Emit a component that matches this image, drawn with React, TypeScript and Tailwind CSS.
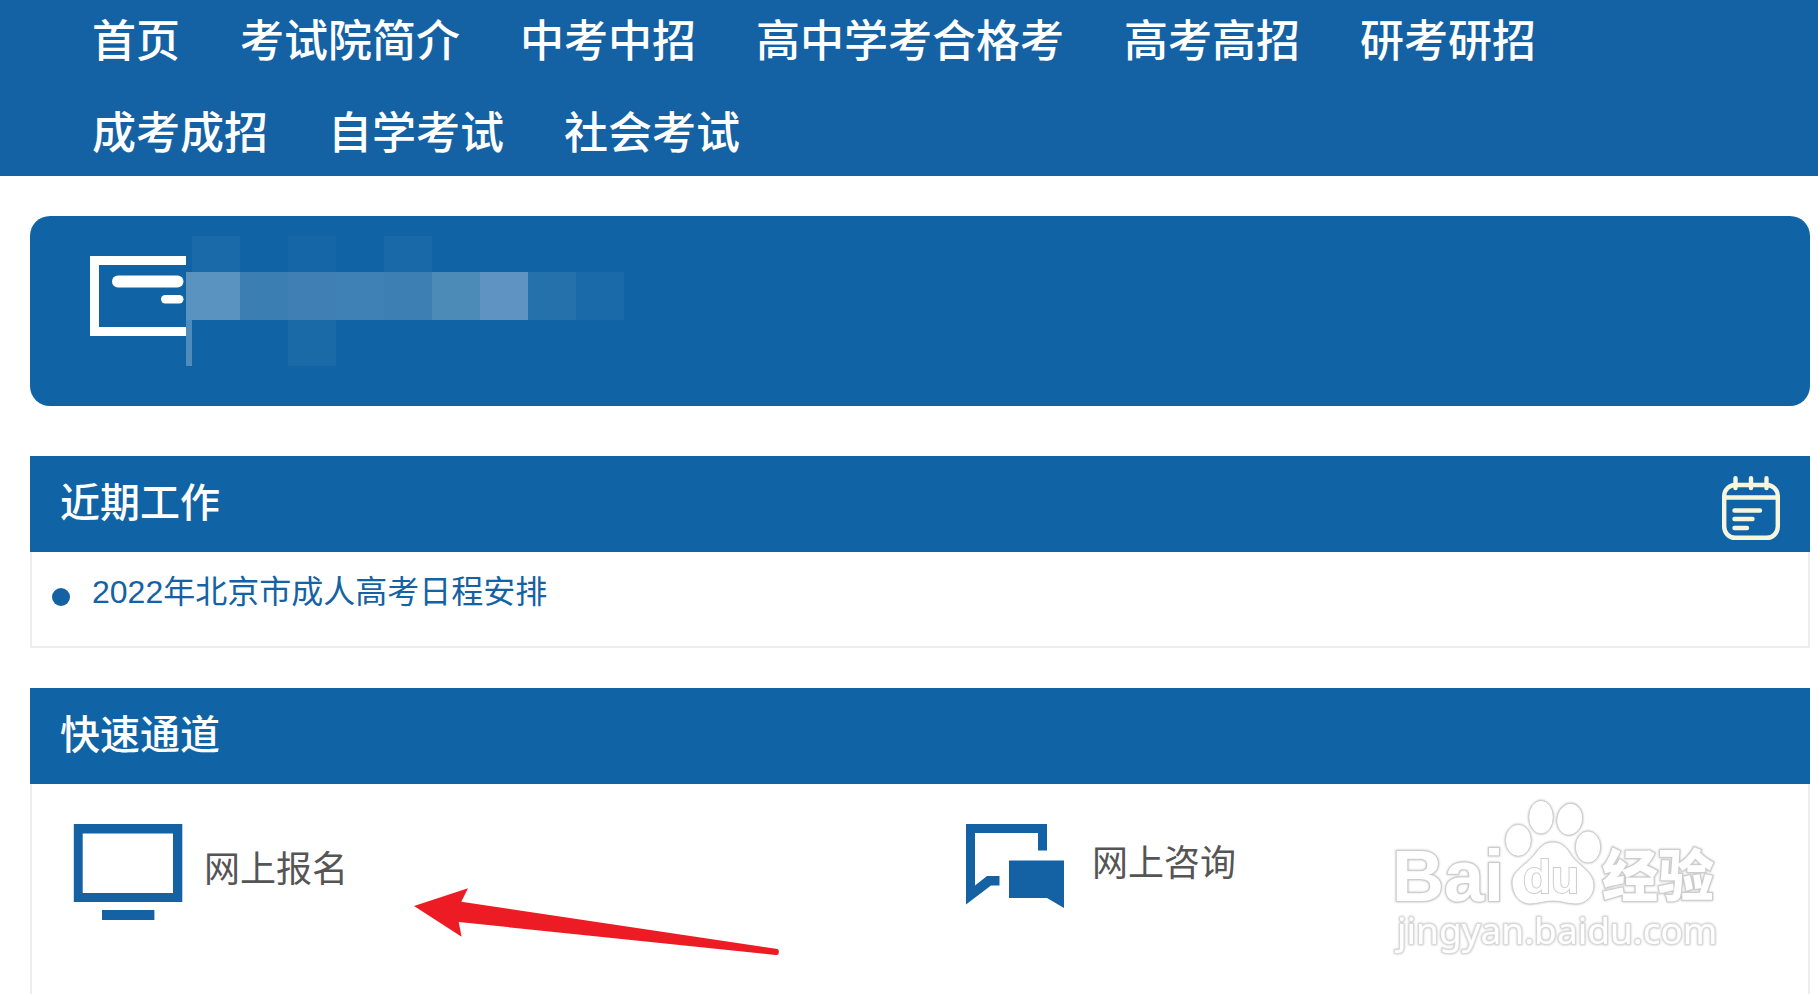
import type { ReactNode } from 'react';

const navItems = [
  '首页',
  '考试院简介',
  '中考中招',
  '高中学考合格考',
  '高考高招',
  '研考研招',
  '成考成招',
  '自学考试',
  '社会考试',
];

const news = ['2022年北京市成人高考日程安排'];

// masked name in the banner, row by row
const mosaic = [
  '', 'bg-[#1a69a8]', '', 'bg-[#1466a6]', '', 'bg-[#1969a8]', '', '', '', '',
  'bg-[#5a93bf]', 'bg-[#5a93bf]', 'bg-[#3a7eb2]', 'bg-[#3f7fb4]', 'bg-[#3f80b5]', 'bg-[#3d7eb3]', 'bg-[#4c8ab8]', 'bg-[#5f94c2]', 'bg-[#2571ac]', 'bg-[#1a69a8]',
  'bg-[#4f8cbb]', '', '', 'bg-[#1b6aa8]', '', '', '', '', '', '',
];

function CardIcon() {
  return (
    <svg className="mt-10 h-20 w-24 shrink-0" viewBox="0 0 96 80" fill="white" aria-hidden="true">
      <path d="M0 0H96V9H9V71H96V80H0Z" />
      <rect x="22" y="19.5" width="71.5" height="12" rx="6" />
      <rect x="71" y="39" width="22.5" height="8.5" rx="4.2" />
    </svg>
  );
}

function CalendarIcon() {
  return (
    <svg
      className="mt-5 h-16 w-[58px]"
      viewBox="0 0 58 64"
      fill="none"
      stroke="#f7f6dd"
      strokeWidth="4.4"
      strokeLinecap="round"
      aria-hidden="true"
    >
      <rect x="2.2" y="9" width="53.6" height="52.8" rx="11" />
      <path d="M3 21.5H55" />
      <path d="M13.5 2.2V12M29 2.2V12M44.5 2.2V12" />
      <path d="M12.5 34.5H38M12.5 43H30.5M12.5 52H25" />
    </svg>
  );
}

function MonitorIcon() {
  return (
    <svg className="h-24 w-28" viewBox="0 0 112 96" fill="#1462a4" aria-hidden="true">
      <path fillRule="evenodd" d="M1.8 0H110.3V78H1.8ZM10.7 9.5V69H101V9.5Z" />
      <rect x="30" y="86" width="52.4" height="10" />
    </svg>
  );
}

function ChatIcon() {
  return (
    <svg className="h-21 w-28" viewBox="0 0 112 84" fill="#1462a4" aria-hidden="true">
      <path d="M6 0H87V26.5H78V9H15V61.5L27 52H39.5V61.5H31L6 80.5Z" />
      <path d="M49 36.5H104V84L87 74H49Z" />
    </svg>
  );
}

function RedArrow() {
  return (
    <svg className="absolute left-[382px] top-[104px] h-[68px] w-[366px]" viewBox="0 0 366 68" fill="#ed1c24" aria-hidden="true">
      <path d="M0 18L54 0.3L47.3 13.7L362 60.8A3 3 0 0 1 361.5 67L44.7 34L47.6 48.7Z" />
    </svg>
  );
}

function Watermark() {
  return (
    <svg
      className="pointer-events-none absolute right-[78px] top-[11px] h-[165px] w-[340px] drop-shadow-[0_0_1px_#b8b8b8]"
      viewBox="0 0 340 165"
      fill="white"
      stroke="#cdcdcd"
      strokeWidth="1"
    >
      <ellipse cx="128.3" cy="45.3" rx="13" ry="16" />
      <ellipse cx="151" cy="22.2" rx="12.3" ry="16.8" />
      <ellipse cx="179.7" cy="24.3" rx="12.8" ry="16" transform="rotate(10 179.7 24.3)" />
      <ellipse cx="198" cy="52" rx="12.7" ry="16" />
      <path d="M163 47C172 47 177 53 182 61C187 69 204 77 204 90C204 102 195 109 186 109C177 109 172 106 163 106C154 106 148 109 140 109C130 109 122 100 122 87C122 76 136 70 144 60C150 52 154 47 163 47Z" />
      <g strokeWidth="2" paintOrder="stroke">
        <text x="2" y="106" className="font-['Liberation_Sans',sans-serif] text-[72px] font-bold">Bai</text>
        <text x="133" y="98" className="font-['Liberation_Sans',sans-serif] text-[46px] font-bold">du</text>
        <text x="212" y="101" className="font-['Noto_Sans_CJK_SC',sans-serif] text-[56px] font-black">经验</text>
        <text x="7" y="149" className="font-['Noto_Sans',sans-serif] text-[37px]" stroke="#dadada">jingyan.baidu.com</text>
      </g>
    </svg>
  );
}

function Panel({ title, icon, children, className = '' }: { title: string; icon?: ReactNode; children: ReactNode; className?: string }) {
  return (
    <section className={`flex flex-col ${className}`}>
      <div className="flex h-24 items-start justify-between bg-[#1064a6] px-[30px]">
        <h2 className="text-[40px] font-medium leading-[94px] text-white">{title}</h2>
        {icon}
      </div>
      {children}
    </section>
  );
}

export default function App() {
  return (
    <div className="flex min-h-screen flex-col bg-white font-['Liberation_Sans','Noto_Sans_CJK_SC',sans-serif]">
      <nav className="bg-[#1462a4] px-[92px]">
        <ul className="flex flex-wrap gap-x-[60px] gap-y-2">
          {navItems.map((item) => (
            <li key={item}>
              <a href="#" className="block text-[44px] font-medium leading-[84px] text-white">{item}</a>
            </li>
          ))}
        </ul>
      </nav>

      <main className="flex flex-1 flex-col pl-[30px] pr-2 pt-10">
        <div className="flex h-[190px] items-start overflow-hidden rounded-[20px] bg-[#1064a6] pl-[60px]">
          <CardIcon />
          <div className="mt-5 grid grid-cols-[6px_repeat(9,48px)] grid-rows-[36px_48px_46px]">
            {mosaic.map((color, i) => (
              <span key={i} className={color} />
            ))}
          </div>
        </div>

        <Panel title="近期工作" icon={<CalendarIcon />} className="mt-[50px]">
          <ul className="h-24 border-2 border-t-0 border-[#ededed] px-5 pt-4">
            {news.map((item) => (
              <li key={item} className="flex items-center gap-[22px]">
                <span className="mt-2.5 size-[18px] rounded-full bg-[#1462a4]" />
                <a href="#" className="text-[32px] leading-[48px] text-[#1462a4]">{item}</a>
              </li>
            ))}
          </ul>
        </Panel>

        <Panel title="快速通道" className="mt-10 flex-1">
          <div className="relative grid flex-1 grid-cols-2 items-start border-x-2 border-[#ededed] pt-10 text-[36px] text-[#555]">
            <a href="#" className="flex items-center gap-5 pl-10">
              <MonitorIcon />
              <span className="pb-1">网上报名</span>
            </a>
            <a href="#" className="flex items-center gap-5 pl-10">
              <ChatIcon />
              <span className="pb-1">网上咨询</span>
            </a>
            <RedArrow />
            <Watermark />
          </div>
        </Panel>
      </main>
    </div>
  );
}
